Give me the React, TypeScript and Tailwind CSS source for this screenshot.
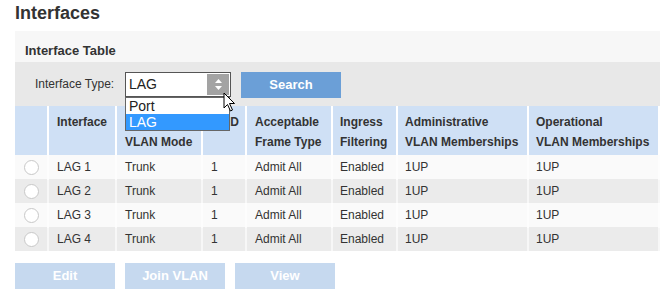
import React from 'react';

const rows = [
    { name: 'LAG 1', mode: 'Trunk', pvid: '1', frame: 'Admit All', filter: 'Enabled', admin: '1UP', oper: '1UP' },
    { name: 'LAG 2', mode: 'Trunk', pvid: '1', frame: 'Admit All', filter: 'Enabled', admin: '1UP', oper: '1UP' },
    { name: 'LAG 3', mode: 'Trunk', pvid: '1', frame: 'Admit All', filter: 'Enabled', admin: '1UP', oper: '1UP' },
    { name: 'LAG 4', mode: 'Trunk', pvid: '1', frame: 'Admit All', filter: 'Enabled', admin: '1UP', oper: '1UP' },
];

const cols = 'grid grid-cols-[32px_68px_86px_44px_86px_65px_131px_131px_100px]';

function Cursor() {
    return (
        <svg className="absolute left-[223px] top-[92px]" width="14" height="21" viewBox="0 0 14 21">
            <path d="M1 1 L1 16 L4.5 12.5 L7.5 19 L9.5 18 L6.5 11.5 L11.5 11.5 Z" fill="#fff" stroke="#000" strokeWidth="1" strokeLinejoin="round" />
        </svg>
    );
}

export default function App() {
    return (
        <div className="relative w-[660px] h-[289px] overflow-hidden bg-white font-['Liberation_Sans',Arial,sans-serif] text-[#333]">
            <h1 className="pl-[15px] text-[18px] font-bold leading-[25px] h-[31px] pt-[1px]">Interfaces</h1>

            <div className="ml-[15px]">
                <div className="h-[31px] bg-[#f7f7f7] pl-[10px] pt-[12px] text-[13px] font-bold leading-[16px]">Interface Table</div>

                <div className="h-[44px] bg-[#e8e8e8] flex items-start pt-[10px]">
                    <span className="ml-[20px] w-[90px] text-[12px] leading-[25px]">Interface Type:</span>
                    <div className="relative w-[106px] h-[25px] bg-white border border-[#555] flex items-center">
                        <span className="pl-[3px] text-[14px] text-[#222]">LAG</span>
                        <div className="absolute right-[1px] top-[1px] bottom-[1px] w-[22px] bg-[#a3a3a3] flex flex-col items-center justify-center gap-[3px]">
                            <svg width="7" height="4" viewBox="0 0 7 4"><path d="M0 4 L3.5 0 L7 4 Z" fill="#fff" /></svg>
                            <svg width="7" height="4" viewBox="0 0 7 4"><path d="M0 0 L3.5 4 L7 0 Z" fill="#fff" /></svg>
                        </div>
                    </div>
                    <button className="ml-[10px] w-[100px] h-[26px] bg-[#6b9fd7] text-white text-[13px] font-bold">Search</button>
                </div>

                <div className={`${cols} h-[49px] bg-[#cfe0f5] text-[12px] font-bold leading-[20px]`}>
                    <div />
                    <div className="border-l-2 border-white pl-[8px] pt-[6px]">Interface</div>
                    <div className="border-l-2 border-white pl-[8px] pt-[6px]">Ingress<br />VLAN Mode</div>
                    <div className="border-l-2 border-white pl-[8px] pt-[6px]">PVID</div>
                    <div className="border-l-2 border-white pl-[8px] pt-[6px]">Acceptable<br />Frame Type</div>
                    <div className="border-l-2 border-white pl-[7px] pt-[6px]">Ingress<br />Filtering</div>
                    <div className="border-l-2 border-white pl-[7px] pt-[6px]">Administrative<br />VLAN Memberships</div>
                    <div className="border-l-2 border-white pl-[7px] pt-[6px]">Operational<br />VLAN Memberships</div>
                    <div className="border-l-2 border-white" />
                </div>

                {rows.map((r, i) => (
                    <div key={r.name} className={`${cols} h-[24px] text-[12px] leading-[25px] ${i % 2 === 0 ? 'bg-[#fafafa]' : 'bg-[#ebebeb]'}`}>
                        <div className="flex items-center justify-center">
                            <span className="w-[15px] h-[15px] rounded-full border border-[#c8c8c8] bg-white" />
                        </div>
                        <div className="border-l-2 border-white/60 pl-[8px]">{r.name}</div>
                        <div className="border-l-2 border-white/60 pl-[8px]">{r.mode}</div>
                        <div className="border-l-2 border-white/60 pl-[8px]">{r.pvid}</div>
                        <div className="border-l-2 border-white/60 pl-[8px]">{r.frame}</div>
                        <div className="border-l-2 border-white/60 pl-[7px]">{r.filter}</div>
                        <div className="border-l-2 border-white/60 pl-[7px]">{r.admin}</div>
                        <div className="border-l-2 border-white/60 pl-[7px]">{r.oper}</div>
                        <div className="border-l-2 border-white/60" />
                    </div>
                ))}

                <div className="flex gap-[10px] mt-[12px]">
                    <button className="w-[100px] h-[26px] bg-[#c6d9ef] text-white text-[13px] font-bold">Edit</button>
                    <button className="w-[100px] h-[26px] bg-[#c6d9ef] text-white text-[13px] font-bold">Join VLAN</button>
                    <button className="w-[100px] h-[26px] bg-[#c6d9ef] text-white text-[13px] font-bold">View</button>
                </div>
            </div>

            <div className="absolute left-[125px] top-[97px] w-[105px] h-[34px] bg-white border border-[#666] text-[14px] leading-[16px] text-[#222]">
                <div className="pl-[3px]">Port</div>
                <div className="pl-[3px] bg-[#3399ff] text-white">LAG</div>
            </div>

            <Cursor />
        </div>
    );
}
